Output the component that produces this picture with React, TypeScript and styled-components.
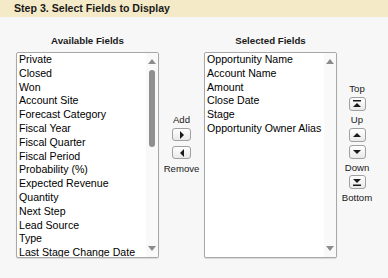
import React from "react";
import styled, { createGlobalStyle } from "styled-components";

const Global = createGlobalStyle`
  html, body { margin: 0; padding: 0; background: #f7f7f7; }
  body { font-family: "Liberation Sans", Arial, sans-serif; color: #111; }
`;

const Page = styled.div`
  width: 388px;
  height: 278px;
  background: #f7f7f7;
  overflow: hidden;
`;

const Header = styled.div`
  height: 17px;
  background: #f4eac7;
  padding-left: 14px;
  font-size: 10.6px;
  font-weight: bold;
  line-height: 17px;
  color: #1a1a1a;
`;

const Body = styled.div`
  display: grid;
  grid-template-columns: 143px 45px 133px 40px;
  grid-template-rows: 12px 206px;
  row-gap: 5px;
  padding: 18px 0 0 16px;
`;

const ColTitle = styled.div<{ $col: number }>`
  grid-column: ${(p) => p.$col};
  grid-row: 1;
  font-size: 9.7px;
  font-weight: bold;
  line-height: 12px;
  text-align: center;
  color: #1a1a1a;
`;

const ListBox = styled.div<{ $col: number }>`
  grid-column: ${(p) => p.$col};
  grid-row: 2;
  box-sizing: border-box;
  height: 206px;
  background: #fff;
  border: 1px solid #a8a8a8;
  border-radius: 2px;
  box-shadow: 0 1px 1px rgba(0, 0, 0, 0.12);
  display: flex;
  overflow: hidden;
`;

const Items = styled.div`
  flex: 1;
  padding: 0 0 0 2px;
  overflow: hidden;
`;

const Item = styled.div`
  font-size: 10.6px;
  line-height: 13.8px;
  white-space: nowrap;
  color: #000;
`;

const ScrollBar = styled.div`
  width: 12px;
  background: #f9f9f9;
  display: flex;
  flex-direction: column;
  align-items: center;
  padding: 6px 0 6px;
`;

const Thumb = styled.div`
  width: 6px;
  height: 77px;
  margin-top: 6px;
  border-radius: 3px;
  background: #8f8f8f;
`;

const Spacer = styled.div`
  flex: 1;
`;

const ButtonCol = styled.div<{ $col: number; $top: number }>`
  grid-column: ${(p) => p.$col};
  grid-row: 1 / span 2;
  display: flex;
  flex-direction: column;
  align-items: center;
  padding-top: ${(p) => p.$top}px;
`;

const Label = styled.div<{ $mb?: number }>`
  font-size: 9.6px;
  line-height: 11px;
  color: #1a1a1a;
  margin-bottom: ${(p) => p.$mb ?? 3}px;
`;

const Btn = styled.button<{ $w: number; $h: number; $mb?: number }>`
  box-sizing: border-box;
  width: ${(p) => p.$w}px;
  height: ${(p) => p.$h}px;
  margin: 0 0 ${(p) => p.$mb ?? 3}px;
  padding: 0;
  border: 1px solid #a0a0a0;
  border-radius: 3px;
  background: linear-gradient(#ffffff, #e9e9e9);
  display: flex;
  align-items: center;
  justify-content: center;
`;

const available = [
  "Private",
  "Closed",
  "Won",
  "Account Site",
  "Forecast Category",
  "Fiscal Year",
  "Fiscal Quarter",
  "Fiscal Period",
  "Probability (%)",
  "Expected Revenue",
  "Quantity",
  "Next Step",
  "Lead Source",
  "Type",
  "Last Stage Change Date",
];

const selected = [
  "Opportunity Name",
  "Account Name",
  "Amount",
  "Close Date",
  "Stage",
  "Opportunity Owner Alias",
];

const UpArrow = () => (
  <svg width="8" height="5" viewBox="0 0 8 5">
    <path d="M0 5 L4 0 L8 5 Z" fill="#8c8c8c" />
  </svg>
);
const DownArrow = () => (
  <svg width="8" height="5" viewBox="0 0 8 5">
    <path d="M0 0 L8 0 L4 5 Z" fill="#8c8c8c" />
  </svg>
);

type IconKind = "right" | "left" | "top" | "up" | "down" | "bottom";

const Icon = ({ kind }: { kind: IconKind }) => {
  const f = "#1a1a1a";
  switch (kind) {
    case "right":
      return (
        <svg width="6" height="8" viewBox="0 0 6 8">
          <path d="M1 0 L5 4 L1 8 Z" fill={f} />
        </svg>
      );
    case "left":
      return (
        <svg width="6" height="8" viewBox="0 0 6 8">
          <path d="M5 0 L1 4 L5 8 Z" fill={f} />
        </svg>
      );
    case "up":
      return (
        <svg width="8" height="6" viewBox="0 0 8 6">
          <path d="M0 5 L4 1 L8 5 Z" fill={f} />
        </svg>
      );
    case "down":
      return (
        <svg width="8" height="6" viewBox="0 0 8 6">
          <path d="M0 1 L8 1 L4 5 Z" fill={f} />
        </svg>
      );
    case "top":
      return (
        <svg width="8" height="8" viewBox="0 0 8 8">
          <rect x="0" y="0" width="8" height="1.5" fill={f} />
          <path d="M0 7 L4 3 L8 7 Z" fill={f} />
        </svg>
      );
    case "bottom":
      return (
        <svg width="8" height="8" viewBox="0 0 8 8">
          <path d="M0 1 L8 1 L4 5 Z" fill={f} />
          <rect x="0" y="6.5" width="8" height="1.5" fill={f} />
        </svg>
      );
  }
};

export default function App() {
  return (
    <Page>
      <Global />
      <Header>Step 3. Select Fields to Display</Header>
      <Body>
        <ColTitle $col={1}>Available Fields</ColTitle>
        <ColTitle $col={3}>Selected Fields</ColTitle>
        <ListBox $col={1}>
          <Items>
            {available.map((a) => (
              <Item key={a}>{a}</Item>
            ))}
          </Items>
          <ScrollBar>
            <UpArrow />
            <Thumb />
            <Spacer />
            <DownArrow />
          </ScrollBar>
        </ListBox>
        <ButtonCol $col={2} $top={79}>
          <Label>Add</Label>
          <Btn $w={19} $h={13} $mb={5} aria-label="Add">
            <Icon kind="right" />
          </Btn>
          <Btn $w={19} $h={13} $mb={4} aria-label="Remove">
            <Icon kind="left" />
          </Btn>
          <Label>Remove</Label>
        </ButtonCol>
        <ListBox $col={3}>
          <Items>
            {selected.map((a) => (
              <Item key={a}>{a}</Item>
            ))}
          </Items>
          <ScrollBar>
            <UpArrow />
            <Spacer />
            <DownArrow />
          </ScrollBar>
        </ListBox>
        <ButtonCol $col={4} $top={48}>
          <Label>Top</Label>
          <Btn $w={17} $h={14} aria-label="Top">
            <Icon kind="top" />
          </Btn>
          <Label>Up</Label>
          <Btn $w={17} $h={14} aria-label="Up">
            <Icon kind="up" />
          </Btn>
          <Btn $w={17} $h={14} aria-label="Down">
            <Icon kind="down" />
          </Btn>
          <Label $mb={2}>Down</Label>
          <Btn $w={17} $h={14} aria-label="Bottom">
            <Icon kind="bottom" />
          </Btn>
          <Label>Bottom</Label>
        </ButtonCol>
      </Body>
    </Page>
  );
}
